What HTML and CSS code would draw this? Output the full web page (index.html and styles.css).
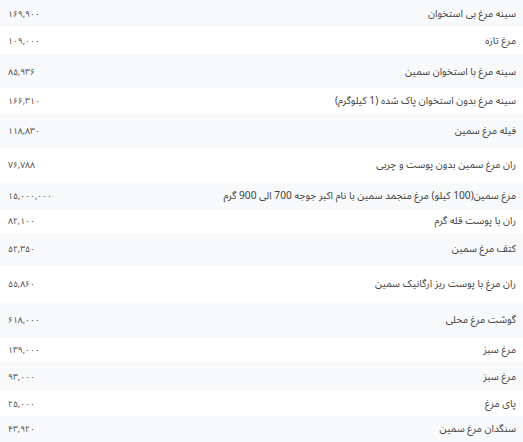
FILE: index.html
```html
<!DOCTYPE html>
<html lang="fa" dir="rtl">
<head>
<meta charset="utf-8">
<link rel="stylesheet" href="styles.css">
</head>
<body>
<table class="prices">
<tbody>
<tr><td class="name">سینه مرغ بی استخوان</td><td class="price">۱۶۹,۹۰۰</td></tr>
<tr><td class="name">مرغ تازه</td><td class="price">۱۰۹,۰۰۰</td></tr>
<tr><td class="name">سینه مرغ با استخوان سمین</td><td class="price">۸۵,۹۳۶</td></tr>
<tr><td class="name">سینه مرغ بدون استخوان پاک شده (1 کیلوگرم)</td><td class="price">۱۶۶,۳۱۰</td></tr>
<tr><td class="name">فیله مرغ سمین</td><td class="price">۱۱۸,۸۳۰</td></tr>
<tr><td class="name">ران مرغ سمین بدون پوست و چربی</td><td class="price">۷۶,۷۸۸</td></tr>
<tr><td class="name">مرغ سمین(100 کیلو) مرغ منجمد سمین با نام اکبر جوجه 700 الی 900 گرم</td><td class="price">۱۵,۰۰۰,۰۰۰</td></tr>
<tr><td class="name">ران با پوست قله گرم</td><td class="price">۸۲,۱۰۰</td></tr>
<tr><td class="name">کتف مرغ سمین</td><td class="price">۵۲,۳۵۰</td></tr>
<tr><td class="name">ران مرغ با پوست ریز ارگانیک سمین</td><td class="price">۵۵,۸۶۰</td></tr>
<tr><td class="name">گوشت مرغ محلی</td><td class="price">۶۱۸,۰۰۰</td></tr>
<tr><td class="name">مرغ سبز</td><td class="price">۱۳۹,۰۰۰</td></tr>
<tr><td class="name">مرغ سبز</td><td class="price">۹۳,۰۰۰</td></tr>
<tr><td class="name">پای مرغ</td><td class="price">۲۵,۰۰۰</td></tr>
<tr><td class="name">سنگدان مرغ سمین</td><td class="price">۴۳,۹۲۰</td></tr>
</tbody>
</table>
</body>
</html>
```
FILE: styles.css
```css
html, body {
  margin: 0;
  padding: 0;
  background: #ffffff;
}
body {
  font-family: "Noto Sans Arabic", "Noto Naskh Arabic", "DejaVu Sans", sans-serif;
  font-size: 10.2px;
  color: #434343;
}
.prices {
  width: 523px;
  border-collapse: collapse;
}
.prices td {
  padding: 0 7px 0 8px;
  vertical-align: middle;
  white-space: nowrap;
}
.prices tr:nth-child(odd) {
  background: #f8f9fa;
}
.prices .name {
  text-align: right;
}
.prices .price {
  text-align: left;
  width: 110px;
  font-size: 8.6px;
}
.prices tr:nth-child(1) { height: 27px; }
.prices tr:nth-child(2) { height: 28px; }
.prices tr:nth-child(3) { height: 33px; }
.prices tr:nth-child(4) { height: 26px; }
.prices tr:nth-child(5) { height: 34px; }
.prices tr:nth-child(6) { height: 34px; }
.prices tr:nth-child(7) { height: 27px; }
.prices tr:nth-child(8) { height: 24px; }
.prices tr:nth-child(9) { height: 32px; }
.prices tr:nth-child(10) { height: 37px; }
.prices tr:nth-child(11) { height: 35px; }
.prices tr:nth-child(12) { height: 25px; }
.prices tr:nth-child(13) { height: 29px; }
.prices tr:nth-child(14) { height: 25px; }
.prices tr:nth-child(15) { height: 26px; }
```
